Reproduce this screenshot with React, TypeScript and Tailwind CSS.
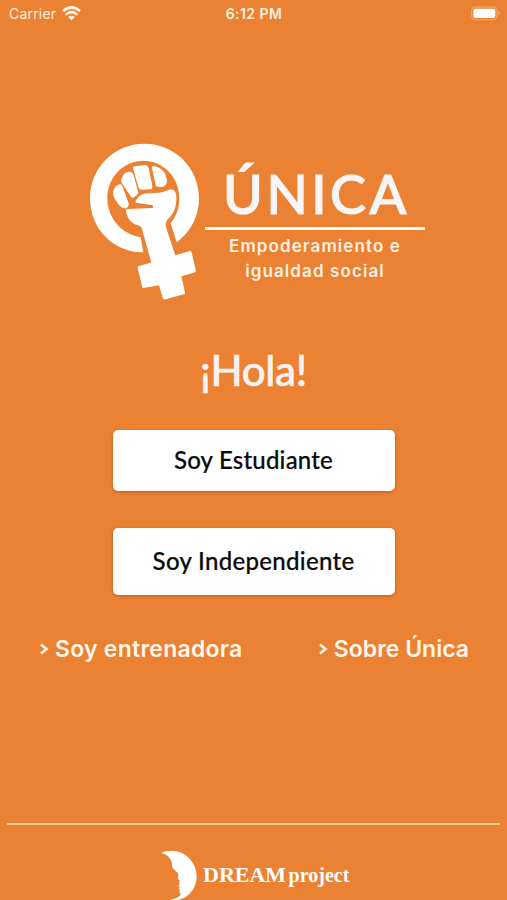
import type { ReactNode } from 'react'

function WifiIcon() {
  return (
    <svg width="19" height="15" viewBox="0 0 57 45" fill="none" stroke="#fff4e8" strokeWidth="8">
      <path d="M3 15 Q28.500 -6 54 15" />
      <path d="M11 26 Q28.500 11 46 26" />
      <path d="M18 33 Q28.500 25 39 33 L28.500 43Z" fill="#fff4e8" stroke="none" />
    </svg>
  )
}

function BatteryIcon() {
  return (
    <svg width="30" height="15" viewBox="0 0 90 45">
      <rect x="2" y="3" width="76" height="38" rx="11" fill="none" stroke="#f2ab75" strokeWidth="3" />
      <rect x="7" y="8" width="66" height="28" rx="6" fill="#fff" />
      <path d="M82 16 Q91 22 82 28Z" fill="#f2ab75" />
    </svg>
  )
}

function FistLogo() {
  return (
    <svg className="shrink-0" width="130" height="170" viewBox="0 0 390 510" fill="#fff">
      <path d="M290 322 C333 291 357 242 357 190 C357 98 284 26 193 26 C102 26 30 99 30 190 C30 282 102 354 190 352 L182 307 C126 299 82 249 82 190 C82 127 130 77 190 77 C251 77 298 127 298 190 C298 219 289 244 272 265Z" />
      <path d="M113 150 C119 146 126 148 128 155 L145 202 C148 213 143 220 135 220 C126 220 117 211 110 200 C101 188 98 179 100 169 C102 160 107 153 113 150Z" />
      <path d="M127 127 C130 115 144 108 153 111 C158 113 160 118 162 124 L174 169 C176 175 174 178 171 180 L163 186 C158 190 153 188 150 181 L125 143 C122 138 124 132 127 127Z" />
      <path d="M160 103 C158 97 160 95 166 94 L192 90 C200 89 204 93 206 100 L217 153 C218 160 216 163 209 163 L187 164 C180 164 177 162 175 156Z" />
      <path d="M216 98 C215 93 218 92 224 94 C237 97 250 105 255 116 C261 130 263 143 257 150 C252 156 241 157 235 156 C229 156 227 152 226 147Z" />
      <path d="M177 184 C184 178 195 176 207 175 L237 173 C257 171 266 160 278 164 C287 167 290 178 289 195 C288 217 281 235 267 249 C258 258 256 266 258 277 L286 361 L330 348 C333 347 334 349 335 352 L347 404 C348 410 347 412 342 413 L304 424 L315 473 C316 476 314 477 311 478 L258 493 C252 494 249 493 248 488 L237 451 L190 459 C187 460 187 457 186 454 L173 399 C172 395 174 394 177 393 L211 383 C214 382 213 380 212 376 L186 282 C184 276 181 273 174 271 C156 267 140 249 138 227 C138 223 140 222 145 222 L215 219 C221 219 221 211 215 210 L177 205 L169 204 C165 202 166 198 170 192Z" />
    </svg>
  )
}

function MoonLogo() {
  return (
    <svg width="38" height="50" viewBox="0 0 114 150" fill="#fff">
      <path d="M3 9 C12 4 22 2 34 2 C76 2 110 36 110 78 C110 118 82 147 50 150 L28 150 C42 147 52 144 60 137 L62 130 L58 126 L60 121 L56 117 L59 112 L55 108 L59 103 L57 97 L60 92 L54 87 C51 84 55 80 55 75 C54 66 46 63 40 56 C34 48 38 38 32 29 C26 18 16 11 3 9Z" />
    </svg>
  )
}

function RoleButton({ children, className }: { children: ReactNode; className: string }) {
  return (
    <button
      className={`w-[282px] rounded-[5px] bg-white pb-[2px] font-['Lato'] font-medium text-[24px] text-[#0b0b0b] shadow-[0_1px_3px_rgba(110,50,10,0.45)] [-webkit-text-stroke:0.2px_#0b0b0b] ${className}`}
    >
      {children}
    </button>
  )
}

function NavLink({ children, className }: { children: ReactNode; className?: string }) {
  return (
    <a className={`flex gap-[6px] ${className ?? ''}`}>
      <svg className="mt-[10px]" width="10" height="12" viewBox="0 0 10 12" fill="none" stroke="currentColor" strokeWidth="2.6">
        <path d="M2 1.500 L7.500 6 L2 10.500" />
      </svg>
      <span>{children}</span>
    </a>
  )
}

export default function App() {
  return (
    <div className="flex h-[900px] w-[507px] flex-col items-center overflow-hidden bg-[#eb8132] text-white">
      <header className="grid h-7 w-full shrink-0 grid-cols-3 items-center pb-[2px] pl-[9px] pr-[6px] font-['Inter'] text-[14px] text-[#fff0e0]">
        <div className="flex items-center gap-[6px]">
          <span className="tracking-[0.2px]">Carrier</span>
          <WifiIcon />
        </div>
        <span className="whitespace-nowrap pr-[2px] text-center font-semibold tracking-[0.45px]">6:12 PM</span>
        <div className="flex justify-end">
          <BatteryIcon />
        </div>
      </header>

      <section className="mt-[107px] flex h-[170px] w-full shrink-0 pl-20">
        <FistLogo />
        <div className="-ml-[5px] flex w-[220px] flex-col items-center font-['Lato']">
          <h1 className="mt-[26px] whitespace-nowrap pl-[3px] text-[54px] font-medium leading-[66px] tracking-[3.5px] text-[#f7f5f6] [-webkit-text-stroke:1.2px_#f7f5f6]">
            ÚNICA
          </h1>
          <div className="h-[3px] w-full bg-[#fff7ef]" />
          <p className="mt-[4px] whitespace-nowrap text-center font-['Inter'] text-[17px] font-semibold leading-[25px] tracking-[1.1px] text-[#fff0e2]">
            Empoderamiento e<br />igualdad social
          </p>
        </div>
      </section>

      <main className="flex w-full flex-col items-center">
        <h2 className="mt-[40px] font-['Lato'] text-[42px] font-medium leading-[50px] tracking-[-0.3px] text-[#f8f2f2] [-webkit-text-stroke:0.6px_#f8f2f2]">
          ¡Hola!
        </h2>
        <RoleButton className="mt-[35px] h-[61px] tracking-[0.2px]">Soy Estudiante</RoleButton>
        <RoleButton className="mt-[37px] h-[67px] tracking-[0.3px]">Soy Independiente</RoleButton>
        <nav className="mt-[38px] flex w-full justify-between pl-[39px] pr-[38px] font-['Inter'] text-[23px] font-semibold leading-8 text-[#fff6e9]">
          <NavLink className="tracking-[0.25px]">Soy entrenadora</NavLink>
          <NavLink>Sobre Única</NavLink>
        </nav>
      </main>

      <footer className="mt-auto flex h-[77px] w-full shrink-0 flex-col items-center px-[7px]">
        <div className="h-[2px] w-full bg-[#f9c894]" />
        <div className="mt-[25px] flex w-full items-start pl-[153px]">
          <MoonLogo />
          <p className="ml-[5px] mt-[10px] whitespace-nowrap font-['Liberation_Serif'] text-[22px] font-bold leading-[30px]">
            DREAM <span className="-ml-[3px] text-[20px]">project</span>
          </p>
        </div>
      </footer>
    </div>
  )
}
